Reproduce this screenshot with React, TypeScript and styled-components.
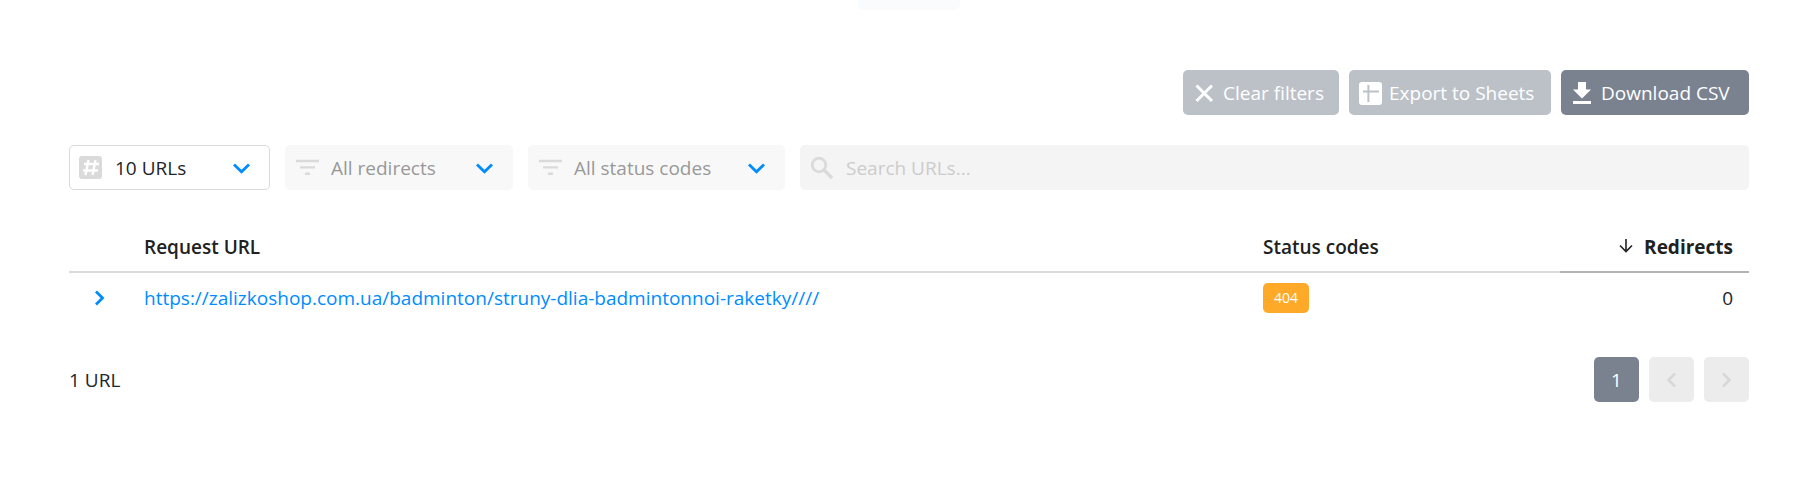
import React from "react";
import styled, { createGlobalStyle } from "styled-components";

const GlobalStyle = createGlobalStyle`
  *, *::before, *::after { box-sizing: border-box; }
  body {
    margin: 0;
    background: #ffffff;
    color: #212529;
    font-family: "Segoe UI", "Open Sans", "Noto Sans", sans-serif;
    font-size: 19px;
    line-height: 28px;
  }
  button, input, select { font: inherit; }
`;

const Page = styled.div`
  display: flex;
  flex-direction: column;
`;

const Tab = styled.div`
  align-self: center;
  width: 103px;
  height: 10px;
  margin-left: 18px;
  border-radius: 0 0 6px 6px;
  background: #fafbfd;
`;

const Content = styled.main`
  display: flex;
  flex-direction: column;
  padding: 60px 49px 48px 69px;
`;

const Actions = styled.div`
  display: flex;
  justify-content: flex-end;
  gap: 10px;
  margin-bottom: 30px;
`;

const ActionButton = styled.button<{ $dimmed?: boolean; $width: number }>`
  display: flex;
  align-items: center;
  gap: 7px;
  min-width: ${(p) => p.$width}px;
  height: 45px;
  padding: 0 9px;
  border: 0;
  border-radius: 5px;
  background: ${(p) => (p.$dimmed ? "#bcc1c8" : "#7a8290")};
  color: #ffffff;
  white-space: nowrap;

  svg { flex: none; }
`;

const Filters = styled.div`
  display: flex;
  gap: 15px;
  margin-bottom: 34px;
`;

const SelectBox = styled.label<{ $width: number }>`
  position: relative;
  flex: 0 0 ${(p) => p.$width}px;
  height: 45px;

  svg {
    position: absolute;
    top: 10px;
    pointer-events: none;
  }
  svg:first-child { left: 10px; }
  svg:last-child { right: 16px; }
`;

const Select = styled.select<{ $active?: boolean }>`
  appearance: none;
  width: 100%;
  height: 45px;
  padding: 0 44px 0 45px;
  border: 1px solid ${(p) => (p.$active ? "#dadada" : "#f8f8f8")};
  border-radius: 5px;
  background: ${(p) => (p.$active ? "#ffffff" : "#f8f8f8")};
  color: ${(p) => (p.$active ? "#212529" : "#999999")};
`;

const SearchBox = styled.label`
  display: flex;
  flex: 1;
  align-items: center;
  gap: 12px;
  min-width: 0;
  height: 45px;
  padding: 0 10px;
  border-radius: 5px;
  background: #f4f4f4;
`;

const SearchInput = styled.input`
  flex: 1;
  min-width: 0;
  padding: 0;
  border: 0;
  outline: 0;
  background: transparent;
  color: #212529;

  &::placeholder { color: #cccccc; opacity: 1; }
`;

const Table = styled.table`
  width: 100%;
  border-collapse: separate;
  border-spacing: 0;
  table-layout: fixed;
  margin-bottom: 34px;
`;

const HeadCell = styled.th<{ $width?: number; $sorted?: boolean }>`
  width: ${(p) => (p.$width ? `${p.$width}px` : "auto")};
  height: 49px;
  padding: 0 ${(p) => (p.$sorted ? 16 : 0)}px 2px 0;
  border-bottom: 2px solid ${(p) => (p.$sorted ? "#b3b3b3" : "#dadada")};
  color: #212121;
  font-weight: ${(p) => (p.$sorted ? 700 : 600)};
  text-align: ${(p) => (p.$sorted ? "right" : "left")};
  white-space: nowrap;

  svg { margin-right: 10px; }
`;

const Cell = styled.td<{ $end?: boolean }>`
  height: 50px;
  padding: 0 ${(p) => (p.$end ? 16 : 0)}px 0 0;
  text-align: ${(p) => (p.$end ? "right" : "left")};
`;

const ExpandButton = styled.button`
  display: flex;
  align-items: center;
  padding: 0 23px;
  border: 0;
  background: transparent;
`;

const UrlLink = styled.a`
  color: #008cff;
  text-decoration: none;
`;

const StatusBadge = styled.span`
  display: flex;
  align-items: center;
  justify-content: center;
  width: 46px;
  height: 30px;
  border-radius: 5px;
  background: #ffa929;
  color: #ffffff;
  font-size: 14px;
`;

const Footer = styled.footer`
  display: flex;
  align-items: center;
  justify-content: space-between;
`;

const Pagination = styled.nav`
  display: flex;
  gap: 10px;
`;

const PageButton = styled.button<{ $current?: boolean }>`
  display: flex;
  align-items: center;
  justify-content: center;
  width: 45px;
  height: 45px;
  padding: 0;
  border: 0;
  border-radius: 5px;
  background: ${(p) => (p.$current ? "#7a8290" : "#ececec")};
  color: #ffffff;
`;

const Icon = ({ size = 24, children }: { size?: number; children: React.ReactNode }) => (
  <svg width={size} height={size} viewBox={`0 0 ${size} ${size}`} fill="none" aria-hidden="true">
    {children}
  </svg>
);

const CloseIcon = () => (
  <Icon>
    <path d="M4.5 4.5l15.5 15.5M20 4.500L4.500 20" stroke="#fff" strokeWidth="3" />
  </Icon>
);

const SheetIcon = () => (
  <Icon>
    <rect x="1" y="1" width="23" height="23" rx="3" fill="#fff" />
    <path d="M5 10.400h16M10.400 4v17" stroke="#bcc1c8" strokeWidth="2" />
  </Icon>
);

const DownloadIcon = () => (
  <Icon>
    <path d="M8 1h8v7.500h5L12 17.500 3 8.500h5zM3 20h18v3H3z" fill="#fff" />
  </Icon>
);

const HashIcon = () => (
  <Icon>
    <rect x="0" y="1" width="23" height="23" rx="3" fill="#dadada" />
    <path d="M9.500 5L6.500 20M16.500 5l-3 15M5 9h15M4 15.500h15" stroke="#fff" strokeWidth="2.400" />
  </Icon>
);

const FilterIcon = () => (
  <Icon>
    <path d="M1 6h23M5 12.400h15M10 18.700h5" stroke="#dadada" strokeWidth="2.400" />
  </Icon>
);

const SearchIcon = () => (
  <Icon>
    <circle cx="9" cy="9" r="6.800" stroke="#dadada" strokeWidth="2.800" />
    <path d="M13.500 13.500l8.500 8.500" stroke="#dadada" strokeWidth="3.400" />
  </Icon>
);

const ChevronDown = () => (
  <Icon>
    <path d="M4 9.500l7.500 7.200 7.500-7.200" stroke="#008cff" strokeWidth="2.800" />
  </Icon>
);

const ChevronRight = ({ color }: { color: string }) => (
  <Icon size={16}>
    <path d="M4 1.500L10.500 8 4 14.500" stroke={color} strokeWidth="2.800" />
  </Icon>
);

const ChevronLeft = ({ color }: { color: string }) => (
  <Icon size={16}>
    <path d="M11 1.500L4.500 8l6.500 6.500" stroke={color} strokeWidth="2.800" />
  </Icon>
);

const SortIcon = () => (
  <Icon size={16}>
    <path d="M8 1v12M2 7.500l6 6 6-6" stroke="#212121" strokeWidth="1.600" />
  </Icon>
);

interface FilterProps {
  label: string;
  value: string;
  width: number;
  active?: boolean;
  icon: React.ReactNode;
}

const FilterSelect = ({ label, value, width, active, icon }: FilterProps) => (
  <SelectBox $width={width}>
    {icon}
    <Select aria-label={label} $active={active}>
      <option>{value}</option>
    </Select>
    <ChevronDown />
  </SelectBox>
);

const rows = [
  {
    url: "https://zalizkoshop.com.ua/badminton/struny-dlia-badmintonnoi-raketky////",
    status: 404,
    redirects: 0,
  },
];

export default function App() {
  return (
    <Page>
      <GlobalStyle />
      <Tab />
      <Content>
        <Actions>
          <ActionButton type="button" $dimmed $width={156}>
            <CloseIcon />
            Clear filters
          </ActionButton>
          <ActionButton type="button" $dimmed $width={202}>
            <SheetIcon />
            Export to Sheets
          </ActionButton>
          <ActionButton type="button" $width={188}>
            <DownloadIcon />
            Download CSV
          </ActionButton>
        </Actions>

        <Filters>
          <FilterSelect label="URLs per page" value="10 URLs" width={201} active icon={<HashIcon />} />
          <FilterSelect label="Redirects" value="All redirects" width={228} icon={<FilterIcon />} />
          <FilterSelect label="Status codes" value="All status codes" width={257} icon={<FilterIcon />} />
          <SearchBox>
            <SearchIcon />
            <SearchInput type="search" aria-label="Search URLs" placeholder="Search URLs..." />
          </SearchBox>
        </Filters>

        <Table>
          <thead>
            <tr>
              <HeadCell $width={75} aria-label="Details" />
              <HeadCell>Request URL</HeadCell>
              <HeadCell $width={297}>Status codes</HeadCell>
              <HeadCell $width={189} $sorted aria-sort="descending">
                <SortIcon />
                Redirects
              </HeadCell>
            </tr>
          </thead>
          <tbody>
            {rows.map((row) => (
              <tr key={row.url}>
                <Cell>
                  <ExpandButton type="button" aria-label="Show details">
                    <ChevronRight color="#008cff" />
                  </ExpandButton>
                </Cell>
                <Cell>
                  <UrlLink href={row.url}>{row.url}</UrlLink>
                </Cell>
                <Cell>
                  <StatusBadge>{row.status}</StatusBadge>
                </Cell>
                <Cell $end>{row.redirects}</Cell>
              </tr>
            ))}
          </tbody>
        </Table>

        <Footer>
          <span>1 URL</span>
          <Pagination aria-label="Pages">
            <PageButton type="button" $current aria-current="page">1</PageButton>
            <PageButton type="button" disabled aria-label="Previous page">
              <ChevronLeft color="#d8d8d8" />
            </PageButton>
            <PageButton type="button" disabled aria-label="Next page">
              <ChevronRight color="#d8d8d8" />
            </PageButton>
          </Pagination>
        </Footer>
      </Content>
    </Page>
  );
}
